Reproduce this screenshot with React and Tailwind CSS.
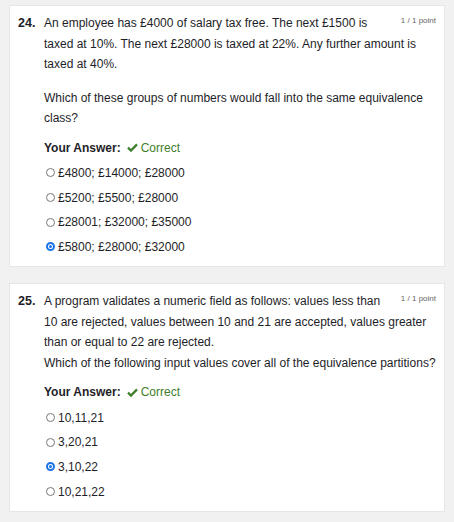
import React from 'react';

const questions = [
  {
    num: '24.',
    paras: [
      'An employee has £4000 of salary tax free. The next £1500 is taxed at 10%. The next £28000 is taxed at 22%. Any further amount is taxed at 40%.',
      'Which of these groups of numbers would fall into the same equivalence class?',
    ],
    gap: true,
    options: ['£4800; £14000; £28000', '£5200; £5500; £28000', '£28001; £32000; £35000', '£5800; £28000; £32000'],
    selected: 3,
  },
  {
    num: '25.',
    paras: [
      'A program validates a numeric field as follows: values less than 10 are rejected, values between 10 and 21 are accepted, values greater than or equal to 22 are rejected.',
      'Which of the following input values cover all of the equivalence partitions?',
    ],
    gap: false,
    options: ['10,11,21', '3,20,21', '3,10,22', '10,21,22'],
    selected: 2,
  },
];

const Radio = ({ checked }) =>
  checked ? (
    <span className="inline-block w-[9px] h-[9px] rounded-full border-[2px] border-[#1a73e8] bg-white mr-[3px] box-border relative">
      <span className="absolute inset-[1px] rounded-full bg-[#1a73e8]" />
    </span>
  ) : (
    <span className="inline-block w-[9px] h-[9px] rounded-full border border-[#777] bg-white mr-[3px] box-border" />
  );

const Question = ({ q }) => (
  <div className="bg-white mx-[9px] border border-[#e6e6e6] pl-[8px] pr-[7px] pt-[7px] pb-[7px] flex">
    <div className="w-[26px] shrink-0 font-bold text-[12.5px] leading-[20.5px]">{q.num}</div>
    <div className="flex-1">
      <div className="float-right text-[8px] text-[#666] leading-[16px] ml-[20px] mr-[1px]">1 / 1 point</div>
      <p className="leading-[20.5px]">{q.paras[0]}</p>
      <p className={`leading-[20.5px] ${q.gap ? 'mt-[13px]' : ''}`}>{q.paras[1]}</p>
      <div className="mt-[9px] leading-[20px] flex items-center">
        <span className="font-bold">Your Answer:</span>
        <span className="ml-[6px] text-[#3f7f2c] flex items-center">
          <svg width="11" height="9" viewBox="0 0 12 10" className="mr-[3px]">
            <path d="M1 5.2 L4.3 8.4 L11 1.6" fill="none" stroke="#3f7f2c" strokeWidth="2.6" />
          </svg>
          Correct
        </span>
      </div>
      <div className="mt-[3px]">
        {q.options.map((o, i) => (
          <div key={i} className="h-[24.7px] flex items-center pl-[2px]">
            <Radio checked={i === q.selected} />
            <span>{o}</span>
          </div>
        ))}
      </div>
    </div>
  </div>
);

export default function App() {
  return (
    <div className="w-[454px] h-[522px] bg-[#f1f1f1] pt-[5px] text-[12px] text-[#1e1e28] font-['Liberation_Sans'] flex flex-col gap-[16px]">
      {questions.map((q) => (
        <Question key={q.num} q={q} />
      ))}
    </div>
  );
}
